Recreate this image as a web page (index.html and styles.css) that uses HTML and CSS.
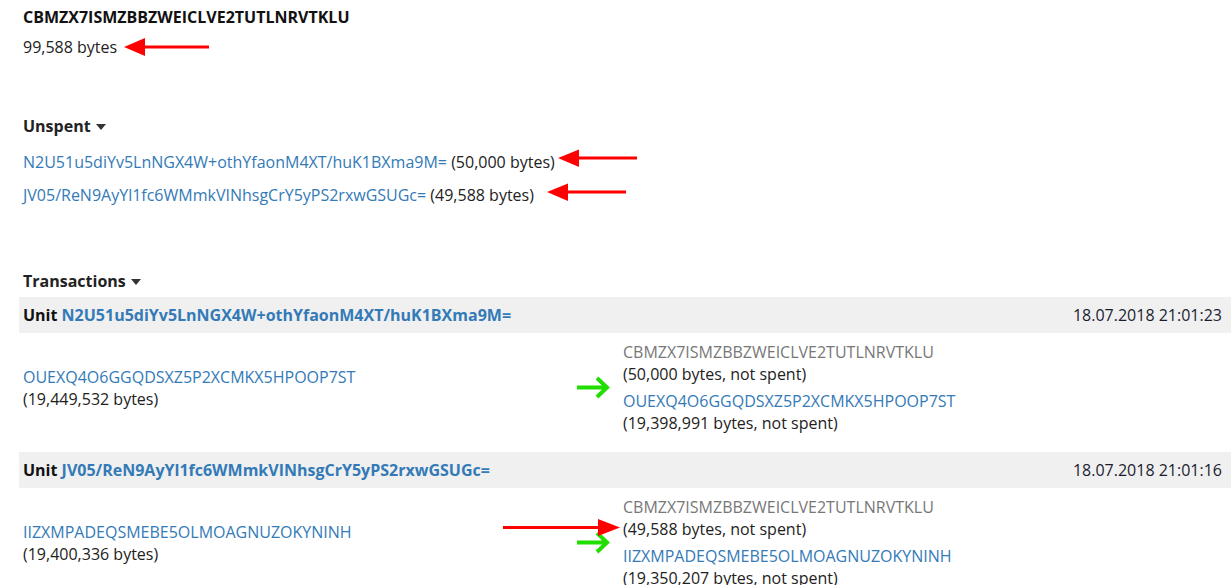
FILE: index.html
```html
<!DOCTYPE html>
<html>
<head>
<meta charset="utf-8">
<link rel="stylesheet" href="styles.css">
</head>
<body>
<div class="page">
  <div class="title">CBMZX7ISMZBBZWEICLVE2TUTLNRVTKLU</div>
  <div class="balance">99,588 bytes</div>

  <div class="section-head unspent-head">Unspent <span class="caret"></span></div>
  <div class="utxo first"><a href="#">N2U51u5diYv5LnNGX4W+othYfaonM4XT/huK1BXma9M=</a> (50,000 bytes)</div>
  <div class="utxo second"><a href="#">JV05/ReN9AyYl1fc6WMmkVINhsgCrY5yPS2rxwGSUGc=</a> (49,588 bytes)</div>

  <div class="section-head tx-head">Transactions <span class="caret"></span></div>

  <div class="tx">
    <div class="tx-bar">
      <span class="unit"><b>Unit</b> <a href="#">N2U51u5diYv5LnNGX4W+othYfaonM4XT/huK1BXma9M=</a></span>
      <span class="date">18.07.2018 21:01:23</span>
    </div>
    <div class="tx-body">
      <div class="tx-in">
        <a href="#">OUEXQ4O6GGQDSXZ5P2XCMKX5HPOOP7ST</a>
        <div>(19,449,532 bytes)</div>
      </div>
      <div class="tx-arrow">
        <svg width="33" height="23" viewBox="0 0 33 23"><path d="M0 11.5H30M20 2L30 11.5L20 21" fill="none" stroke="#22dd00" stroke-width="4"/></svg>
      </div>
      <div class="tx-out">
        <div class="out">
          <div class="self">CBMZX7ISMZBBZWEICLVE2TUTLNRVTKLU</div>
          <div>(50,000 bytes, not spent)</div>
        </div>
        <div class="out">
          <a href="#">OUEXQ4O6GGQDSXZ5P2XCMKX5HPOOP7ST</a>
          <div>(19,398,991 bytes, not spent)</div>
        </div>
      </div>
    </div>
  </div>

  <div class="tx">
    <div class="tx-bar">
      <span class="unit"><b>Unit</b> <a href="#">JV05/ReN9AyYl1fc6WMmkVINhsgCrY5yPS2rxwGSUGc=</a></span>
      <span class="date">18.07.2018 21:01:16</span>
    </div>
    <div class="tx-body">
      <div class="tx-in">
        <a href="#">IIZXMPADEQSMEBE5OLMOAGNUZOKYNINH</a>
        <div>(19,400,336 bytes)</div>
      </div>
      <div class="tx-arrow">
        <svg width="33" height="23" viewBox="0 0 33 23"><path d="M0 11.5H30M20 2L30 11.5L20 21" fill="none" stroke="#22dd00" stroke-width="4"/></svg>
      </div>
      <div class="tx-out">
        <div class="out">
          <div class="self">CBMZX7ISMZBBZWEICLVE2TUTLNRVTKLU</div>
          <div>(49,588 bytes, not spent)</div>
        </div>
        <div class="out">
          <a href="#">IIZXMPADEQSMEBE5OLMOAGNUZOKYNINH</a>
          <div>(19,350,207 bytes, not spent)</div>
        </div>
      </div>
    </div>
  </div>

  <svg class="annotations" width="1231" height="585" viewBox="0 0 1231 585">
    <g fill="#ff0000">
      <polygon points="124,47 145,38 145,56"/>
      <rect x="144" y="45.5" width="65" height="3"/>
      <polygon points="558,158 579,149.5 579,167"/>
      <rect x="578" y="156.5" width="59" height="3"/>
      <polygon points="547,192 568,183.5 568,201"/>
      <rect x="567" y="190.5" width="59" height="3"/>
      <polygon points="620,527.5 598,519 598,536"/>
      <rect x="503" y="526" width="96" height="3"/>
    </g>
  </svg>
</div>
</body>
</html>
```

FILE: styles.css
```css
html, body {
  margin: 0;
  padding: 0;
  background: #ffffff;
}

body {
  font-family: "Open Sans", "Liberation Sans", sans-serif;
  font-size: 16px;
  line-height: 22px;
  color: #222222;
}

a {
  color: #337ab7;
  text-decoration: none;
}

.page {
  position: relative;
  padding: 6px 0 0 23px;
  overflow: hidden;
  height: 579px;
}

.title {
  font-weight: 700;
  font-size: 16px;
  color: #111111;
}

.balance {
  margin-top: 8px;
}

.section-head {
  font-weight: 700;
  color: #222222;
}

.unspent-head {
  margin-top: 57px;
}

.caret {
  display: inline-block;
  width: 0;
  height: 0;
  border-left: 5px solid transparent;
  border-right: 5px solid transparent;
  border-top: 6px solid #333333;
  vertical-align: middle;
  margin-left: 1px;
  margin-bottom: 2px;
}

.utxo.first {
  margin-top: 14px;
}

.utxo.second {
  margin-top: 11px;
}

.tx-head {
  margin-top: 64px;
}

.tx {
  margin-left: -4px;
  margin-bottom: 10px;
}

.tx-head + .tx {
  margin-top: 5px;
}

.tx-bar {
  display: flex;
  justify-content: space-between;
  background: #f0f0f0;
  padding: 7px 9px 7px 4px;
}

.tx-bar b {
  color: #111111;
}

.tx-bar .unit a {
  font-weight: 700;
}

.date {
  color: #1c1c30;
}

.tx-body {
  display: grid;
  grid-template-columns: 558px 42px 1fr;
  align-items: center;
  padding: 8px 0;
}

.tx-in {
  padding-left: 4px;
}

.tx-arrow svg {
  display: block;
}

.tx-out {
  padding-left: 4px;
}

.out + .out {
  margin-top: 5px;
}

.self {
  color: #777777;
}

.annotations {
  position: absolute;
  left: 0;
  top: 0;
  pointer-events: none;
}
```
